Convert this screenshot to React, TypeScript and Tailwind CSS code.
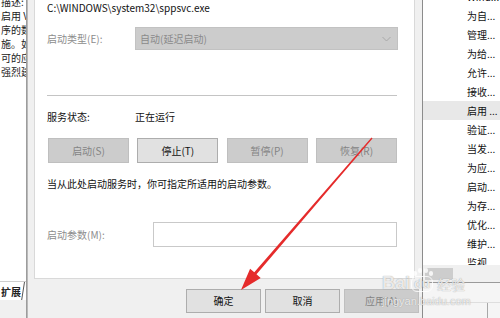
import React from 'react';

const LEFT_LINES = ['描述:', '启用 V', '序的数', '施。如', '可的应', '强烈建'];

const LIST = [
  'Wind...', '为自...', '管理...', '为给...', '允许...', '接收...', '启用 ...',
  '验证...', '当发...', '为应...', '启动...', '为存...', '优化...', '维护...', '监视...',
];

const CTRL = ['启动(S)', '停止(T)', '暂停(P)', '恢复(R)'];

function Btn({ label, on, w }: { label: string; on?: boolean; w: string }) {
  return (
    <div
      className={`${w} h-full flex items-center justify-center border text-[10px] leading-[12px] ${
        on ? 'bg-[#e1e1e1] border-[#adadad] text-[#111]' : 'bg-[#cccccc] border-[#bfbfbf] text-[#848484]'
      }`}
    >
      {label}
    </div>
  );
}

export default function App() {
  return (
    <div className="relative w-[500px] h-[318px] overflow-hidden flex bg-[#f0f0f0] font-['Noto_Sans_CJK_SC',sans-serif] select-none">
      {/* ── background window, left edge ── */}
      <div className="w-[26px] h-full flex flex-col">
        <div className="flex-1 bg-white overflow-hidden">
          <div className="-mt-[5px] text-[10px] leading-[14px] text-[#222] whitespace-nowrap">
            {LEFT_LINES.map((t) => (
              <div key={t} className="pl-[1px]">{t}</div>
            ))}
          </div>
        </div>
        <div className="h-[19px] flex bg-white border-t border-[#cfcfcf]">
          <div className="pl-[1px] text-[10px] leading-[19px] font-bold text-[#222] whitespace-nowrap overflow-hidden">扩展</div>
          <svg width="4" height="19" className="shrink-0">
            <line x1="3.5" y1="0" x2="0.5" y2="19" stroke="#555" strokeWidth="1" />
          </svg>
        </div>
        <div className="h-[18px] bg-[#f0f0f0]" />
      </div>
      <div className="w-[2px] h-full bg-gradient-to-r from-[#8e8e8e] to-[#c8c8c8]" />

      {/* ── properties dialog ── */}
      <div className="w-[394px] h-full flex flex-col bg-[#f0f0f0]">
        <div className="ml-[6px] w-[381px] h-[279px] bg-white border-x border-b border-[#d9d9d9] pl-[12px] flex flex-col text-[10px] leading-[12px]">
          <div className="mt-[2px] h-[12px] text-[#111] whitespace-nowrap">C:\WINDOWS\system32\sppsvc.exe</div>

          <div className="mt-[13px] h-[23px] flex items-center">
            <div className="w-[88px] text-[#8d8d8d]">启动类型(E):</div>
            <div className="w-[263px] h-full flex items-center justify-between pl-[4px] pr-[6px] bg-[#cccccc] border border-[#c2c2c2] text-[#8a8a8a]">
              <span>自动(延迟启动)</span>
              <svg width="9" height="6" viewBox="0 0 9 6">
                <path d="M0.5 1 L4.5 5 L8.5 1" fill="none" stroke="#a8a8a8" strokeWidth="1" />
              </svg>
            </div>
          </div>

          <div className="mt-[45px] w-[350px] h-px bg-[#c4c4c4]" />

          <div className="mt-[15px] h-[12px] flex text-[#111]">
            <div className="w-[88px]">服务状态:</div>
            <div>正在运行</div>
          </div>

          <div className="mt-[15px] h-[25px] ml-px w-[349px] flex justify-between">
            {CTRL.map((c) => (
              <Btn key={c} label={c} on={c === '停止(T)'} w="w-[81px]" />
            ))}
          </div>

          <div className="mt-[15px] h-[12px] text-[#111] whitespace-nowrap">当从此处启动服务时，你可指定所适用的启动参数。</div>

          <div className="mt-[32px] h-[25px] flex items-center">
            <div className="w-[106px] text-[#8d8d8d]">启动参数(M):</div>
            <div className="w-[244px] h-full bg-white border border-[#c9c9c9]" />
          </div>
        </div>

        <div className="mt-[10px] h-[24px] pl-[158px] flex gap-[4px]">
          <Btn label="确定" on w="w-[75px]" />
          <Btn label="取消" on w="w-[75px]" />
          <Btn label="应用(A)" w="w-[75px]" />
        </div>
      </div>
      <div className="w-px h-full bg-[#8c8c8c]" />

      {/* ── services list, right edge ── */}
      <div className="flex-1 h-full flex flex-col">
        <div className="h-[265px] bg-white overflow-hidden">
          <div className="-mt-[13px] flex flex-col">
            {LIST.map((t) => (
              <div
                key={t}
                className={`h-[19px] pl-[44px] flex items-center text-[10px] text-[#111] whitespace-nowrap ${
                  t === '启用 ...' ? 'bg-[#e8e8e8]' : ''
                }`}
              >
                {t}
              </div>
            ))}
          </div>
        </div>
        <div className="h-[17px] bg-[#f0f0f0] pl-[2px] flex items-center">
          <div className="w-[28px] h-[12px] bg-[#cdcdcd]" />
        </div>
        <div className="h-px bg-[#9a9a9a]" />
        <div className="flex-1 flex flex-col bg-[#f5f5f5]">
          <div className="h-[19px]" />
          <div className="flex-1 flex border-t border-[#dedede]">
            <div className="w-[65px] border-r border-[#a8a8a8]" />
          </div>
        </div>
      </div>

      {/* ── red annotation arrow ── */}
      <svg className="absolute inset-0 pointer-events-none" width="500" height="318">
        <polygon
          points="372.5,138.4 256.5,274.3 260.7,277.9 241,290 250.1,268.7 254.3,272.3 371.5,137.6"
          fill="#e52b2b"
        />
      </svg>

      {/* ── watermark ── */}
      <div className="absolute left-[382px] top-[272px] flex flex-col pointer-events-none text-white/80 [text-shadow:0_0_1px_#8a8a8a]">
        <div className="flex items-end h-[20px] font-['Liberation_Sans',sans-serif]">
          <span className="text-[18px] leading-[18px] font-bold">Bai</span>
          <span className="relative text-[13px] leading-[14px] font-bold ml-[1px] px-[2px] rounded-[6px] border border-white/80">
            du
            <span className="absolute -top-[6px] left-[1px] w-[4px] h-[5px] rounded-full bg-white/80" />
            <span className="absolute -top-[9px] left-[6px] w-[4px] h-[5px] rounded-full bg-white/80" />
            <span className="absolute -top-[9px] left-[12px] w-[4px] h-[5px] rounded-full bg-white/80" />
            <span className="absolute -top-[6px] left-[17px] w-[4px] h-[5px] rounded-full bg-white/80" />
          </span>
          <span className="ml-[4px] text-[14px] leading-[16px] font-['Noto_Sans_CJK_SC',sans-serif]">经验</span>
        </div>
        <div className="mt-[4px] text-[11px] leading-[11px] font-['Liberation_Sans',sans-serif]">jingyan.baidu.com</div>
      </div>
    </div>
  );
}
